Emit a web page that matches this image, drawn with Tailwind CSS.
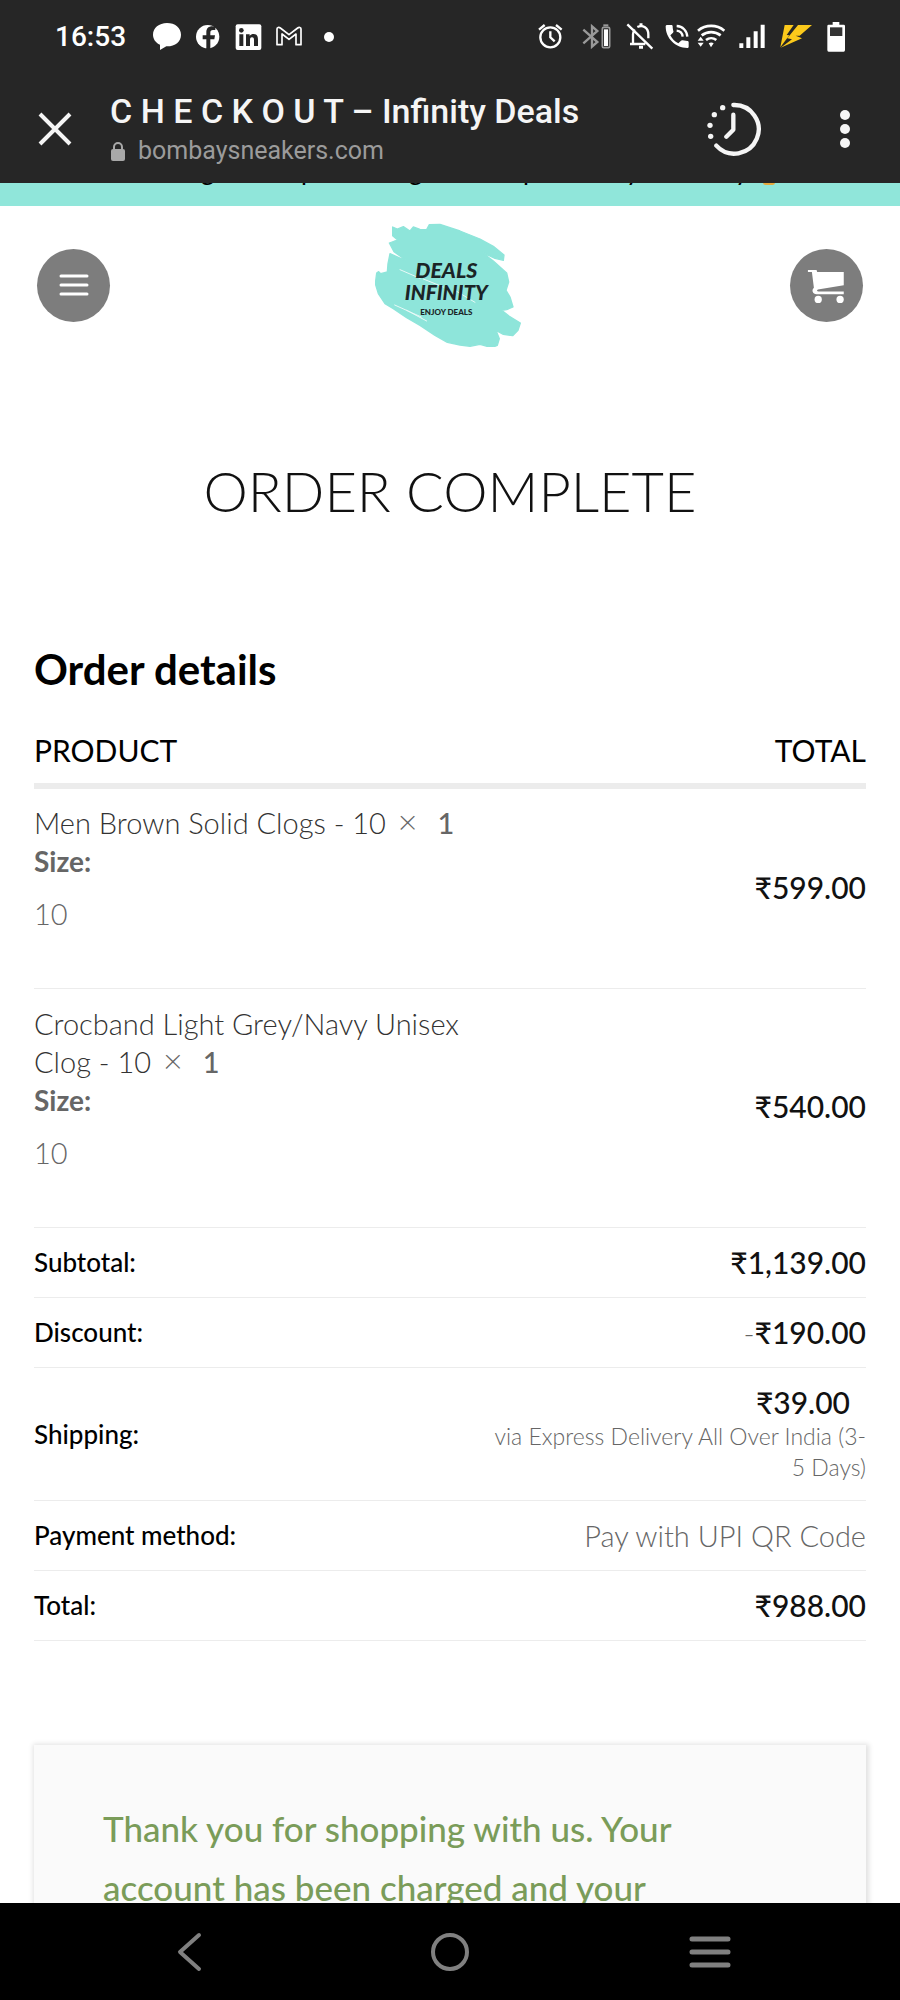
<!DOCTYPE html>
<html lang="en">
<head>
    <meta charset="UTF-8">
    <meta name="viewport" content="width=device-width, initial-scale=1.0">
    <title>CHECKOUT – Infinity Deals</title>
    <script src="https://cdn.jsdelivr.net/npm/@tailwindcss/browser@4"></script>
</head>
<body class="h-screen flex flex-col overflow-hidden bg-white font-['Lato',sans-serif] text-[#666]">

    <!-- Phone status bar + browser bar -->
    <div class="relative shrink-0 bg-[#262626] text-white font-['Roboto',sans-serif]">
        <div class="flex items-center justify-between pl-[55px] pr-[45px] pt-[22px]">
            <div class="flex items-center gap-[10px]">
                <span class="w-[86px] text-[28px] leading-[30px] font-medium">16:53</span>
                <svg class="w-8 h-[30px]" viewBox="453 66 96 90" fill="#fff"><path d="M501 69c-24 0-42 15-42 35 0 13 8 24 21 30v16l19-11c26 1 44-14 44-35s-18-35-42-35z"/></svg>
                <svg class="w-[30px] h-[30px]" viewBox="579 66 90 90"><circle cx="623" cy="110" r="35" fill="#fff"/><path d="M619 147v-29h-11v-12h11v-9c0-12 7-18 18-18l9 1v10h-7c-6 0-8 3-8 8v8h14l-2 12h-12v29z" fill="#262626"/></svg>
                <svg class="w-[30px] h-[30px]" viewBox="699 66 90 90"><rect x="707" y="73" width="77" height="77" rx="6" fill="#fff"/><g fill="#262626"><circle cx="724" cy="91" r="7"/><path d="M718 103h12v35h-12zM738 103h11v5c3-4 7-6 12-6 10 0 13 7 13 17v19h-12v-17c0-5-1-9-6-9s-6 4-6 9v17h-12z"/></g></svg>
                <svg class="w-[30px] h-[30px]" viewBox="819 66 90 90" fill="none" stroke="#fff" stroke-width="5" stroke-linejoin="round"><path d="M831 134V87c0-5 6-6 10-3l26 20 26-20c4-3 10-2 10 3v47h-15v-32l-21 16-21-16v32z"/></svg>
                <svg class="w-[30px] h-[30px]" viewBox="939 66 90 90"><circle cx="987" cy="111" r="15" fill="#fff"/></svg>
            </div>
            <div class="flex items-center">
                <svg class="w-[42px] h-[30px]" viewBox="240 66 126 90" fill="none" stroke="#fff" stroke-width="7"><circle cx="301" cy="112" r="30"/><path d="M301 94v18l13 12M267 89l17-14M335 89l-17-14"/></svg>
                <svg class="w-12 h-[30px]" viewBox="366 66 144 90" fill="none" stroke="#999" stroke-width="7"><path d="M400 89l42 37-16 14V79l16 14-42 37"/><path d="M460 76h15" stroke-width="6"/><rect x="457" y="82" width="22" height="61" rx="4" stroke-width="5"/><path d="M462 88h12v50h-12z" fill="#fff" stroke="none"/></svg>
                <svg class="w-[38px] h-[30px]" viewBox="510 66 114 90" fill="none" stroke="#fff" stroke-width="7"><path d="M532 73l75 73M540 132h46M549 130v-27c0-6 2-11 5-15M562 81c17-8 33 3 33 22v12"/><path d="M573 70v10M567 142h12" stroke-width="9"/></svg>
                <svg class="w-[35px] h-[30px]" viewBox="624 66 105 90"><path d="M651 75h13c3 0 4 2 4 4 0 6 1 10 2 14 1 2 0 4-1 5l-8 8c6 11 13 18 24 24l8-8c1-1 3-2 5-1l14 2c3 0 4 2 4 4v13c0 2-2 4-4 4-36 0-65-29-65-65 0-2 2-4 4-4z" fill="#fff"/><path d="M680 92c10 1 17 8 18 18M680 78c18 1 31 14 32 32" fill="none" stroke="#fff" stroke-width="7"/></svg>
                <svg class="w-[39px] h-[30px]" viewBox="729 66 117 90" fill="none" stroke="#fff" stroke-width="8"><path d="M744 92c23-19 56-19 79 0M755 106c17-13 40-13 57 0M768 120c9-7 22-7 31 0"/><path d="M776 130q8-5 15 0l-8 12zM743 122l9-12 9 12zM743 128h18l-9 12z" fill="#fff" stroke="none"/></svg>
                <svg class="w-10 h-[30px]" viewBox="846 66 120 90" fill="#fff"><path d="M868 130h12v14h-12zM889 112h12v32h-12zM911 94h12v50h-12zM932 74h12v70h-12z"/></svg>
                <svg class="w-[45px] h-[30px]" viewBox="966 66 135 90" fill="#fbc91b"><path d="M1004 75h27l-21 30 8 1-27 36zM1044 75h42l-37 32h-12l19 8-64 28 34-25-14-3z"/></svg>
                <svg class="w-[38px] h-[30px]" viewBox="1101 66 114 90"><path d="M1148 66h20v8h13q4 0 4 4v72q0 5-4 5h-45q-4 0-4-5V78q0-4 4-4h12z" fill="#fff"/><path d="M1140 82h37v26h-37z" fill="#333"/></svg>
            </div>
        </div>
        <div class="flex items-center px-9 pt-[37px] pb-[14px]">
            <button type="button" aria-label="Close" class="shrink-0">
                <svg class="w-[38px] h-[38px]" viewBox="0 0 38 38" stroke="#f5f5f5" stroke-width="4" fill="none"><path d="M4 4l30 30M34 4L4 34"/></svg>
            </button>
            <div class="flex-1 min-w-0 pl-9">
                <div class="text-[34px] leading-[44px] font-medium text-[#f5f5f5] whitespace-nowrap">C H E C K O U T – Infinity Deals</div>
                <div class="flex items-center gap-3 text-[25px] leading-[36px] text-[#9b9b9b]">
                    <svg class="w-4 h-5" viewBox="0 0 16 20"><rect x="1" y="8" width="14" height="12" rx="2" fill="#a8a8a8"/><path d="M4 9V6a4 4 0 0 1 8 0v3" fill="none" stroke="#a8a8a8" stroke-width="2"/></svg>
                    bombaysneakers.com
                </div>
            </div>
            <button type="button" aria-label="History" class="mr-16">
                <svg class="w-[56px] h-[56px]" viewBox="772 301 168 168" fill="none" stroke="#f5f5f5" stroke-width="13" stroke-linecap="round" stroke-linejoin="round"><path d="M854 313a73 73 0 1 1-51 122M854 342v45l-21 21"/><g fill="#f5f5f5" stroke="none"><circle cx="822" cy="321" r="8"/><circle cx="797" cy="342" r="8"/><circle cx="784" cy="374" r="8"/><circle cx="786" cy="407" r="8"/></g></svg>
            </button>
            <button type="button" aria-label="More options">
                <svg class="w-[38px] h-[38px]" viewBox="0 0 38 38" fill="#f5f5f5"><circle cx="19" cy="5" r="5"/><circle cx="19" cy="19" r="5"/><circle cx="19" cy="33" r="5"/></svg>
            </button>
        </div>
    </div>

    <!-- Page content -->
    <div class="flex-1 min-h-0 overflow-hidden">
        <!-- announcement strip, scrolled mostly out of view -->
        <div class="h-[23px] overflow-hidden bg-[#90e6da] text-black">
            <div class="-mt-6 pl-[201px] flex text-[26px] leading-[22px]"><span class="w-[100px]">g</span><span class="w-[108px]">p</span><span class="w-[114px]">g</span><span class="w-[103px]">p</span><span class="w-[109px]">y</span><span class="w-[28px]">y</span><span class="mt-[21px] h-[5px] w-3 rounded-full bg-[#e5a93c]"></span></div>
        </div>

        <header class="flex items-center justify-between px-[37px] pt-[17px]">
            <button type="button" aria-label="Menu" class="w-[73px] h-[73px] rounded-full bg-[#7d7d7d] flex items-center justify-center">
                <svg class="w-[30px] h-[24px]" viewBox="0 0 30 24" stroke="#fff" stroke-width="3" stroke-linecap="round"><path d="M2 3h26M2 12h26M2 21h26"/></svg>
            </button>
            <a href="#" aria-label="Deals Infinity home">
                <svg class="w-[150px] h-[124px]" viewBox="45 38 450 372">
                    <path fill="#8ee5da" d="M98 50L112 56 130 49 150 62 160 50 180 57 200 58 208 43 240 42 300 62 360 86 400 108 432 134 430 150 405 144 366 126 400 152 440 188 446 215 438 240 450 260 459 290 440 298 425 300 448 318 481 338 474 360 458 376 430 372 408 360 418 385 412 405 395 412 360 402 330 408 300 404 262 396 225 375 180 345 140 322 100 295 75 280 55 250 46 220 50 188 56 184 62 190 82 185 84 160 90 130 142 153 102 124 88 98 104 92 114 90 98 76z" stroke="#8ee5da" stroke-width="4" stroke-linejoin="round"/>
                    <path d="M120 178l60 26M190 206l60 24M104 284l80 36M285 240l60 36M140 300l60 32" stroke="#fff" stroke-width="3" stroke-linecap="round" opacity=".8"/>
                    <text x="259" y="204" text-anchor="middle" font-family="Lato, sans-serif" font-weight="900" font-style="italic" font-size="64" fill="#1b2426">DEALS</text>
                    <text x="259" y="270" text-anchor="middle" font-family="Lato, sans-serif" font-weight="900" font-style="italic" font-size="62" fill="#1b2426">INFINITY</text>
                    <text x="259" y="313" text-anchor="middle" font-family="Lato, sans-serif" font-weight="900" font-size="24" fill="#1b2426">ENJOY DEALS</text>
                </svg>
            </a>
            <button type="button" aria-label="Cart" class="w-[73px] h-[73px] rounded-full bg-[#7d7d7d]">
                <svg class="w-[73px] h-[73px]" viewBox="90 57 220 220" fill="#fff"><path d="M144 120h26l2 6h80v40l-78 13q-6 5 2 6h76v8h-82c-12 0-16-12-8-19l-6-48h-12z"/><circle cx="175" cy="209" r="11"/><circle cx="241" cy="209" r="11"/></svg>
            </button>
        </header>

        <h1 class="mt-[110px] text-center text-[56px] leading-[68px] font-light text-[#111]">ORDER COMPLETE</h1>

        <section class="px-[34px] pt-[114px]">
            <h2 class="text-[42px] leading-[60px] font-bold text-black">Order details</h2>
            <table class="w-full text-[29px] leading-[38px] font-light">
                <thead>
                    <tr class="border-b-6 border-[#ececec] text-[30px] text-black">
                        <th scope="col" class="pt-8 pb-[14px] text-left font-normal">PRODUCT</th>
                        <th scope="col" class="pt-8 pb-[14px] text-right font-normal">TOTAL</th>
                    </tr>
                </thead>
                <tbody>
                    <tr class="border-b border-[#ececec]">
                        <td class="w-[55%] pt-[15px] pb-[55px]">
                            <a href="#" class="text-[#333]">Men Brown Solid Clogs - 10</a> <span class="pl-1 text-[34px] leading-none">×</span><span class="pl-5 font-medium">1</span>
                            <div class="text-[28px] font-bold">Size:</div>
                            <div class="pt-[15px]">10</div>
                        </td>
                        <td class="pb-1 text-right text-[30px] font-medium text-[#111]">₹599.00</td>
                    </tr>
                    <tr class="border-b border-[#ececec]">
                        <td class="w-[55%] pt-4 pb-[55px]">
                            <a href="#" class="text-[#333]">Crocband Light Grey/Navy Unisex<br>Clog - 10</a> <span class="pl-1 text-[34px] leading-none">×</span><span class="pl-5 font-medium">1</span>
                            <div class="text-[28px] font-bold">Size:</div>
                            <div class="pt-[15px]">10</div>
                        </td>
                        <td class="pb-1 text-right text-[30px] font-medium text-[#111]">₹540.00</td>
                    </tr>
                </tbody>
                <tfoot class="leading-[37px]">
                    <tr class="border-b border-[#ececec]">
                        <th scope="row" class="py-4 text-left text-[26px] font-medium text-black">Subtotal:</th>
                        <td class="text-right text-[30px] font-medium text-[#111]">₹1,139.00</td>
                    </tr>
                    <tr class="border-b border-[#ececec]">
                        <th scope="row" class="py-4 text-left text-[26px] font-medium text-black">Discount:</th>
                        <td class="text-right text-[30px] font-medium text-[#111]"><span class="font-light text-[#666]">-</span>₹190.00</td>
                    </tr>
                    <tr class="border-b border-[#ececec]">
                        <th scope="row" class="py-4 text-left text-[26px] font-medium text-black">Shipping:</th>
                        <td class="pt-4 pb-[17px] text-right">
                            <div class="pr-4 text-[30px] font-medium text-[#111]">₹39.00</div>
                            <div class="text-[23px] leading-[31px]">via Express Delivery All Over India (3-<br>5 Days)</div>
                        </td>
                    </tr>
                    <tr class="border-b border-[#ececec]">
                        <th scope="row" class="py-4 text-left text-[26px] font-medium text-black">Payment method:</th>
                        <td class="text-right">Pay with UPI QR Code</td>
                    </tr>
                    <tr class="border-b border-[#ececec]">
                        <th scope="row" class="py-4 text-left text-[26px] font-medium text-black">Total:</th>
                        <td class="text-right text-[30px] font-medium text-[#111]">₹988.00</td>
                    </tr>
                </tfoot>
            </table>

            <div class="mt-[104px] bg-[#fafafa] px-[69px] py-[54px] shadow-[1px_1px_5px_2px_rgba(0,0,0,0.12)]">
                <p class="text-[35px] leading-[59px] font-medium text-[#7a9c59]">Thank you for shopping with us. Your<br>account has been charged and your</p>
            </div>
        </section>
    </div>

    <!-- Android navigation bar -->
    <nav class="relative shrink-0 grid grid-cols-[380px_140px_380px] justify-center items-center bg-black pt-[26px] pb-[25px]">
        <button type="button" aria-label="Back" class="justify-self-center">
            <svg class="w-[46px] h-[46px]" viewBox="0 0 46 46" fill="none" stroke="#808080" stroke-width="4" stroke-linecap="round" stroke-linejoin="round"><path d="M32 6L13 23l19 17"/></svg>
        </button>
        <button type="button" aria-label="Home" class="justify-self-center">
            <svg class="w-[46px] h-[46px]" viewBox="0 0 46 46" fill="none" stroke="#808080" stroke-width="4"><circle cx="23" cy="23" r="17"/></svg>
        </button>
        <button type="button" aria-label="Recent apps" class="justify-self-center">
            <svg class="w-[46px] h-[46px]" viewBox="0 0 46 46" stroke="#808080" stroke-width="5" stroke-linecap="round"><path d="M5 10h36M5 23h36M5 36h36"/></svg>
        </button>
    </nav>
</body>
</html>
